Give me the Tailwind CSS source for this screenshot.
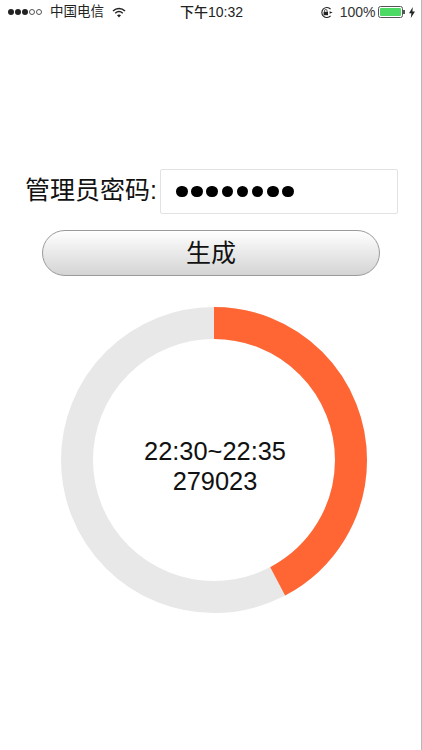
<!DOCTYPE html>
<html lang="zh">

<head>
    <meta charset="UTF-8" />
    <title>管理员密码</title>
    <script src="https://cdn.jsdelivr.net/npm/@tailwindcss/browser@4"></script>
</head>

<body class="bg-white">
    <div class="w-[422px] h-[750px] overflow-hidden border-r border-[#b8b8b8] text-[#111] font-['Liberation_Sans','Noto_Sans_CJK_SC',sans-serif]">
        <!-- status bar -->
        <div class="flex items-center justify-between h-6 pl-2 pr-[6px] text-[13.5px] text-[#222]">
            <div class="flex items-center w-[150px]">
                <div class="flex gap-[1px] items-center">
                    <span class="w-[6px] h-[6px] rounded-full bg-[#222]"></span>
                    <span class="w-[6px] h-[6px] rounded-full bg-[#222]"></span>
                    <span class="w-[6px] h-[6px] rounded-full bg-[#222]"></span>
                    <span class="w-[6px] h-[6px] rounded-full border border-[#555]"></span>
                    <span class="w-[6px] h-[6px] rounded-full border border-[#555]"></span>
                </div>
                <span class="ml-[8px]">中国电信</span>
                <svg class="ml-[8px]" width="14" height="11" viewBox="0 0 14 11" fill="none" stroke="#222" stroke-width="1.5">
                    <path d="M1 4 C4.5 0.8 9.5 0.8 13 4" />
                    <path d="M3.2 6.2 C5.4 4.3 8.6 4.3 10.8 6.2" />
                    <path d="M7 10.5 L5 8.2 C6.2 7.3 7.8 7.3 9 8.2 Z" fill="#222" stroke="none" />
                </svg>
            </div>
            <span class="font-medium text-[14px]">下午10:32</span>
            <div class="flex items-center justify-end w-[150px]">
                <svg width="13" height="13" viewBox="0 0 13 13" fill="none">
                    <path d="M10.6 3.2 A5 5 0 1 0 10.6 9.8" stroke="#222" stroke-width="1.1" />
                    <path d="M9.6 5.2 L12.6 6.5 L9.6 7.8 Z" fill="#222" />
                    <rect x="3.6" y="5.8" width="4.4" height="3.4" fill="#222" />
                    <path d="M4.5 5.8 V4.8 A1.3 1.3 0 0 1 7.1 4.8 V5.8" stroke="#222" stroke-width="0.8" />
                </svg>
                <span class="ml-[7px] text-[14px] text-[#333]">100%</span>
                <div class="ml-[3px] flex items-center">
                    <div class="w-[25px] h-[12px] rounded-[2.5px] border border-[#555] p-[1px]">
                        <div class="w-full h-full rounded-[1px] bg-[#4cd964]"></div>
                    </div>
                    <div class="w-[1.5px] h-1 bg-[#555]"></div>
                </div>
                <svg class="ml-[4px]" width="6" height="11" viewBox="0 0 6 11">
                    <path d="M3.8 0 L0 6.2 H2.4 L1.8 11 L6 4.4 H3.4 Z" fill="#222" />
                </svg>
            </div>
        </div>

        <!-- password -->
        <div class="flex items-center mt-[145px] pl-[25px] h-[45px]">
            <label class="text-[25px] leading-none w-[135px] whitespace-nowrap -mt-[2px]">管理员密码:</label>
            <div class="w-[238px] h-[45px] flex items-center pl-[15px] border border-[#e2e2e2] rounded-[2px] gap-[3.7px]">
                <span class="w-[11.5px] h-[11.5px] rounded-full bg-black"></span>
                <span class="w-[11.5px] h-[11.5px] rounded-full bg-black"></span>
                <span class="w-[11.5px] h-[11.5px] rounded-full bg-black"></span>
                <span class="w-[11.5px] h-[11.5px] rounded-full bg-black"></span>
                <span class="w-[11.5px] h-[11.5px] rounded-full bg-black"></span>
                <span class="w-[11.5px] h-[11.5px] rounded-full bg-black"></span>
                <span class="w-[11.5px] h-[11.5px] rounded-full bg-black"></span>
                <span class="w-[11.5px] h-[11.5px] rounded-full bg-black"></span>
            </div>
        </div>

        <button class="block ml-[42px] mt-4 w-[338px] h-[46px] pt-[2px] rounded-full border border-[#9a9a9a] bg-linear-to-b from-white to-[#d4d4d4] text-[25px] text-[#111]">生成</button>

        <!-- ring -->
        <div class="relative ml-[61px] mt-[31px] w-[306px] h-[306px]">
            <svg width="306" height="306" viewBox="0 0 306 306" fill="none">
                <circle cx="153" cy="153" r="137" stroke="#e8e8e8" stroke-width="32" />
                <circle cx="153" cy="153" r="137" stroke="#ff6633" stroke-width="32" stroke-dasharray="364 861" transform="rotate(-90 153 153)" />
            </svg>
            <div class="absolute inset-0 flex flex-col items-center justify-center pt-[11px] pl-[2px] text-[25.4px] leading-[30px] text-[#111]">
                <span>22:30~22:35</span>
                <span>279023</span>
            </div>
        </div>
    </div>
</body>

</html>
